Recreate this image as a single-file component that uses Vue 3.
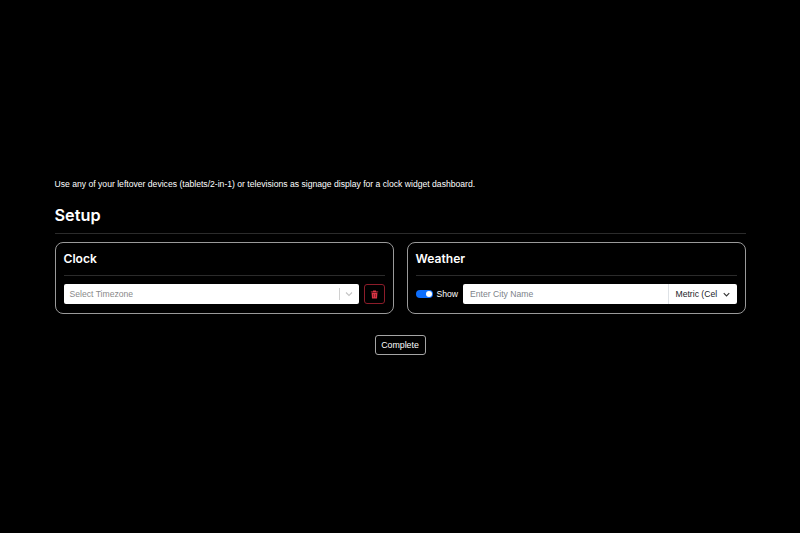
<script setup>
const title = 'Setup'
const intro = 'Use any of your leftover devices (tablets/2-in-1) or televisions as signage display for a clock widget dashboard.'
</script>

<template>
  <div class="page">
    <div class="container">
      <p class="intro">{{ intro }}</p>
      <h1>{{ title }}</h1>
      <hr class="rule">

      <div class="cards">
        <section class="card">
          <h2>Clock</h2>
          <hr class="rule inner">
          <div class="row">
            <div class="select-box">
              <span class="placeholder">Select Timezone</span>
              <span class="sep"></span>
              <svg class="chev grey" viewBox="0 0 20 20"><path d="M5 7.500l5 5 5-5" /></svg>
            </div>
            <button class="del-btn" aria-label="Delete">
              <svg viewBox="0 0 16 16"><path d="M5.500 1h5l.5 1.500h3.500V4h-13V2.500H5zM2.800 5h10.400l-.7 10h-9zM6.200 7v6h.6V7zm3 0v6h.6V7z" fill-rule="evenodd" /></svg>
            </button>
          </div>
        </section>

        <section class="card">
          <h2>Weather</h2>
          <hr class="rule inner">
          <div class="row">
            <span class="switch"><i></i></span>
            <span class="show">Show</span>
            <div class="group">
              <span class="city">Enter City Name</span>
              <span class="unit">
                <span class="unit-text">Metric (Cel</span>
                <svg class="chev dark" viewBox="0 0 20 20"><path d="M5 7.500l5 5 5-5" /></svg>
              </span>
            </div>
          </div>
        </section>
      </div>

      <div class="actions">
        <button class="complete">Complete</button>
      </div>
    </div>
  </div>
</template>

<style>
html, body { background: #000; }
</style>

<style scoped>
.page {
  height: 533px; background: #000; color: #fff;
  font-family: "Liberation Sans", Arial, sans-serif;
  display: flex; justify-content: center;
  padding-top: 179px; box-sizing: border-box;
}
.container { width: 691px; }
.intro { margin: 0; font-size: 8.620px; line-height: 11px; }
h1 {
  margin: 13px 0 0; font-family: Inter, "Liberation Sans", sans-serif;
  font-size: 16.300px; line-height: 24px; font-weight: 600;
}
.rule { border: none; border-top: 1px solid #2b2b2b; margin: 6px 0 0; }

.cards { display: grid; grid-template-columns: 1fr 1fr; gap: 13px; margin-top: 8px; }
.card {
  height: 71.500px; box-sizing: border-box; padding: 8px;
  border: 1px solid #9a9a9a; border-radius: 8px;
}
h2 {
  margin: 0; font-family: Inter, "Liberation Sans", sans-serif;
  font-size: 12.100px; line-height: 16px; font-weight: 600;
}
.inner { margin: 8px 0; }
.row { display: flex; align-items: center; height: 20px; }

.select-box {
  flex: 1; height: 20px; background: #fff; border-radius: 2px;
  display: flex; align-items: center; padding: 0 4px 0 6px;
}
.placeholder { flex: 1; color: #8a8a8a; font-size: 8.620px; }
.sep { width: 1px; height: 12px; background: #d0d0d0; margin-right: 3px; }
.chev { width: 12px; height: 12px; fill: none; stroke-width: 1.800; }
.chev.grey { stroke: #c4c4c4; }
.chev.dark { stroke: #333; width: 11px; height: 11px; flex: none; stroke-width: 2; }

.del-btn {
  width: 21px; height: 20px; margin-left: 5px; padding: 0;
  background: #000; border: 1px solid #8c1d2a; border-radius: 3px;
  display: flex; align-items: center; justify-content: center;
}
.del-btn svg { width: 9px; height: 9px; fill: #dc3545; }

.switch {
  width: 17px; height: 8px; border-radius: 4px; background: #0d6efd;
  display: flex; align-items: center; justify-content: flex-end; padding: 0 1px;
  box-sizing: border-box;
}
.switch i { width: 6px; height: 6px; border-radius: 50%; background: #fff; }
.show { font-size: 8.620px; margin: 0 5px 0 4px; }

.group { flex: 1; height: 20px; display: flex; background: #fff; border-radius: 2px; }
.city { flex: 1; color: #7d838a; font-size: 8.620px; line-height: 20px; padding-left: 7px; }
.unit {
  width: 68.500px; box-sizing: border-box; border-left: 1px solid #dee2e6;
  display: flex; align-items: center; justify-content: space-between;
  padding: 0 5px 0 6.500px; color: #212529; font-size: 8.620px;
}
.unit-text { white-space: nowrap; }

.actions { display: flex; justify-content: center; margin-top: 21px; }
.complete {
  width: 51px; height: 20.500px; padding: 0; background: #000; color: #fff;
  border: 1px solid #a5a5a5; border-radius: 3px;
  font: inherit; font-size: 8.800px;
}
</style>
